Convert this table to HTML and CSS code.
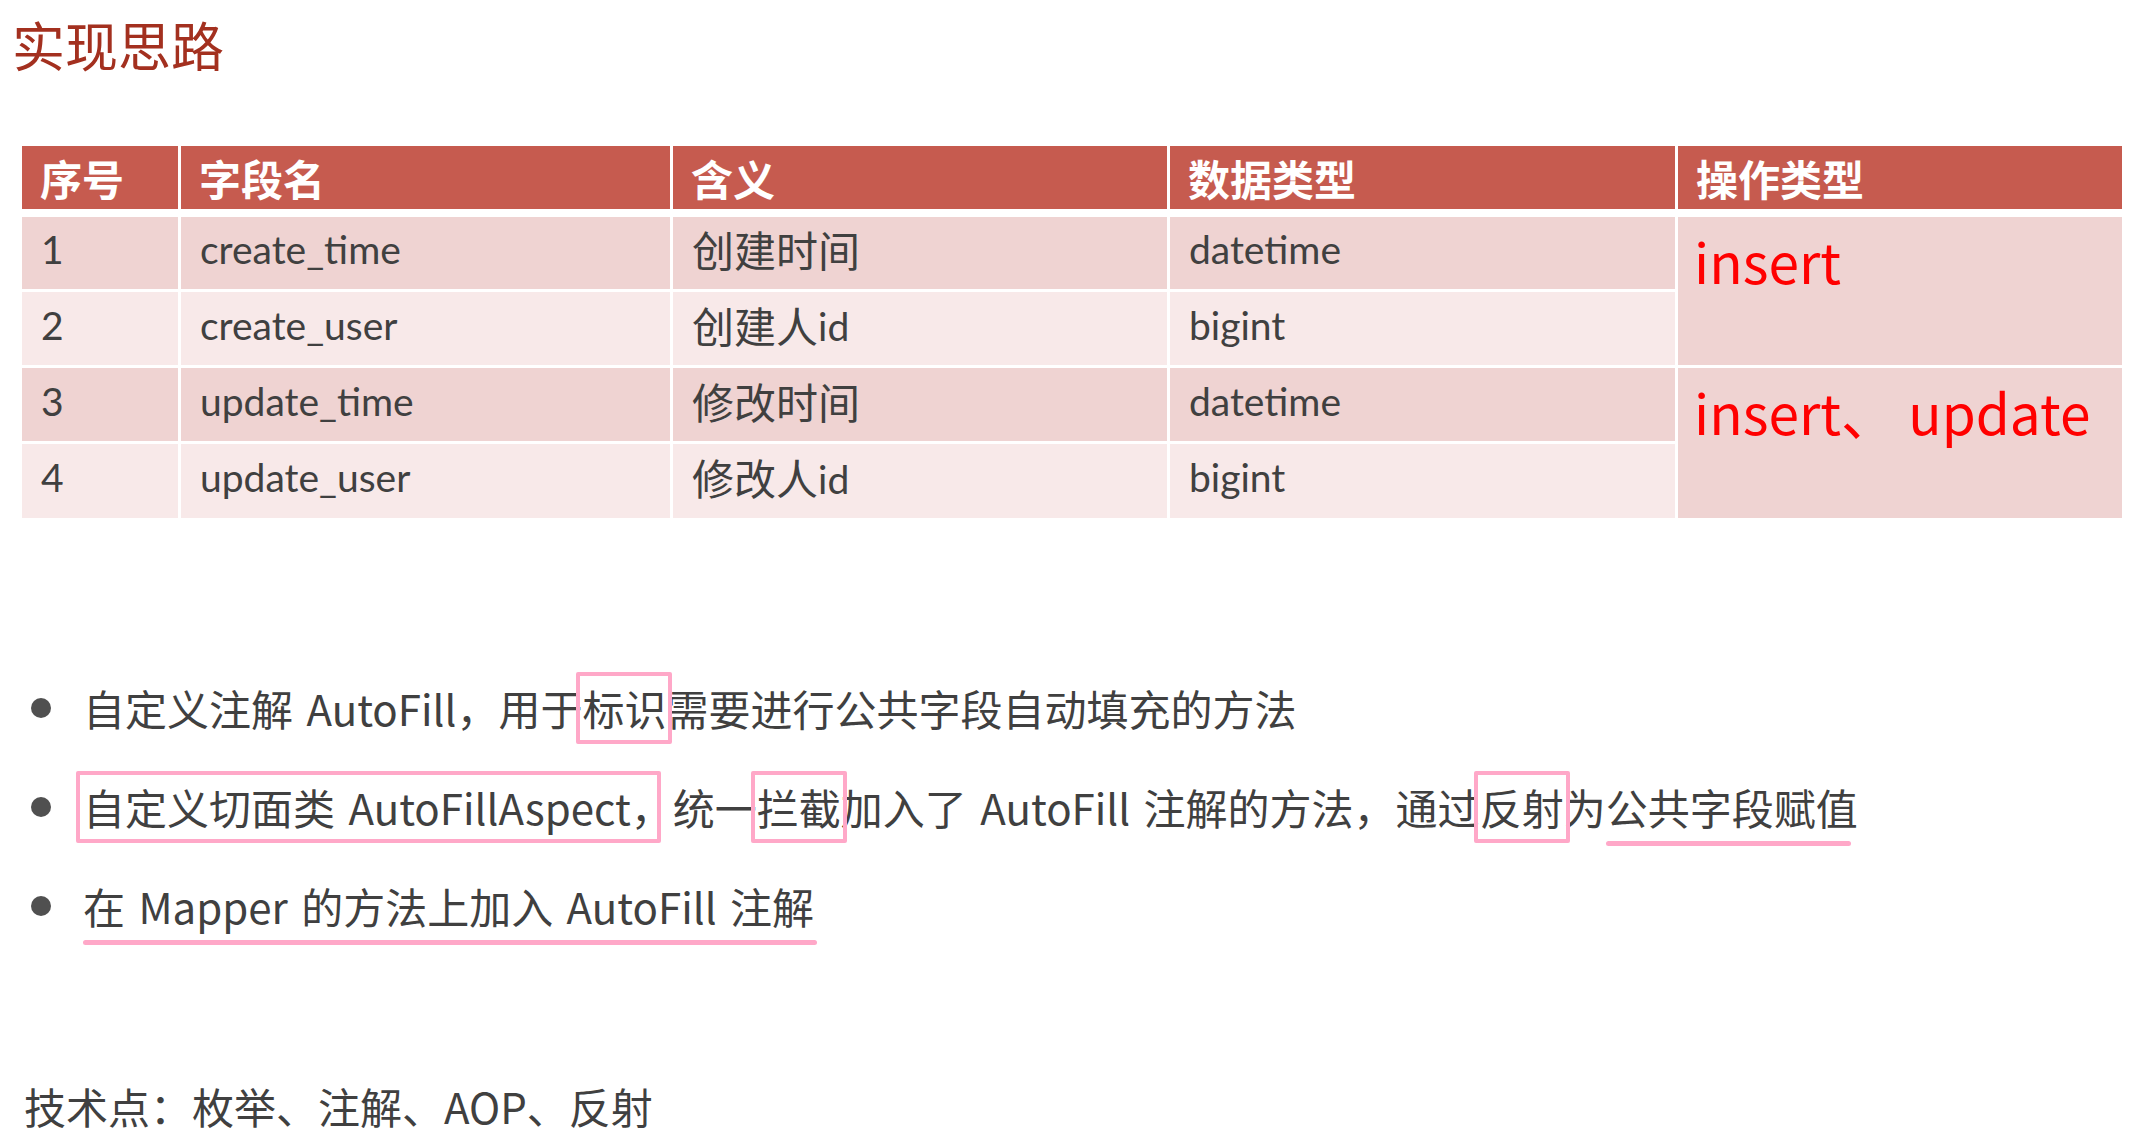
FILE: index.html
```html
<!DOCTYPE html>
<html lang="zh-CN">
<head>
<meta charset="utf-8">
<title>实现思路</title>
<link rel="stylesheet" href="styles.css">
</head>
<body>
<main class="slide">
  <h1 class="title">实现思路</h1>

  <section class="table">
    <div class="thead">
      <div class="th">序号</div>
      <div class="th">字段名</div>
      <div class="th">含义</div>
      <div class="th">数据类型</div>
      <div class="th">操作类型</div>
    </div>
    <div class="tbody">
      <div class="td dark en">1</div>
      <div class="td dark en">create_time</div>
      <div class="td dark">创建时间</div>
      <div class="td dark en">datetime</div>
      <div class="td op">insert</div>

      <div class="td light en">2</div>
      <div class="td light en">create_user</div>
      <div class="td light">创建人<span class="en">id</span></div>
      <div class="td light en">bigint</div>

      <div class="td dark en">3</div>
      <div class="td dark en">update_time</div>
      <div class="td dark">修改时间</div>
      <div class="td dark en">datetime</div>
      <div class="td op">insert、 update</div>

      <div class="td light en">4</div>
      <div class="td light en">update_user</div>
      <div class="td light">修改人<span class="en">id</span></div>
      <div class="td light en">bigint</div>
    </div>
  </section>

  <ul class="points">
    <li class="point"><span class="dot"></span><span class="text">自定义注解 AutoFill，用于<span class="box">标识</span>需要进行公共字段自动填充的方法</span></li>
    <li class="point"><span class="dot"></span><span class="text"><span class="box box-wide">自定义切面类 AutoFillAspect，</span>统一<span class="box">拦截</span>加入了 AutoFill 注解的方法，通过<span class="box">反射</span>为<span class="uline uline-short">公共字段赋值</span></span></li>
    <li class="point"><span class="dot"></span><span class="text"><span class="uline uline-long">在 Mapper 的方法上加入 AutoFill 注解</span></span></li>
  </ul>

  <p class="tech">技术点：枚举、注解、AOP、反射</p>
</main>
</body>
</html>
```

FILE: styles.css
```css
html, body {
  margin: 0;
  padding: 0;
  background: #ffffff;
}

body {
  font-family: "Noto Sans CJK SC", "Noto Sans", sans-serif;
  color: #404040;
}

.slide {
  width: 2147px;
  height: 1132px;
  overflow: hidden;
  box-sizing: border-box;
  padding-top: 18px;
}

.title {
  margin: 0 0 0 12px;
  height: 53px;
  font-size: 53px;
  line-height: 53px;
  font-weight: 400;
  color: #a3301f;
}

.table {
  margin: 75px 0 0 22px;
  width: 2100px;
}

.thead,
.tbody {
  display: grid;
  grid-template-columns: 156px 489px 494px 505px 444px;
  column-gap: 3px;
}

.thead {
  height: 63px;
  margin-bottom: 8px;
}

.th {
  background: #c65b4f;
  color: #ffffff;
  font-size: 42px;
  font-weight: 700;
  display: flex;
  align-items: center;
  padding-left: 18px;
}

.tbody {
  grid-template-rows: 72px 73px 73px 74px;
  row-gap: 3px;
}

.td {
  display: flex;
  align-items: center;
  padding-left: 19px;
  padding-bottom: 7px;
  font-size: 42px;
  line-height: 1.3;
  color: #404040;
}

.en {
  font-family: "Lato", "Noto Sans CJK SC", sans-serif;
  font-size: 39px;
}

.td .en {
  padding-top: 3px;
}

.dark {
  background: #efd3d2;
}

.light {
  background: #f8e9e9;
}

.op {
  grid-row: span 2;
  background: #efd3d2;
  color: #ff0000;
  font-size: 55px;
  line-height: 68px;
  align-items: flex-start;
  padding-left: 16px;
  padding-top: 9px;
  padding-bottom: 0;
  white-space: pre;
}

.points {
  list-style: none;
  margin: 140px 0 0 0;
  padding: 0 0 0 31px;
}

.point {
  height: 99px;
  display: flex;
  align-items: center;
  font-size: 42px;
  line-height: 60px;
  word-spacing: 4px;
  color: #404040;
}

.dot {
  width: 20px;
  height: 20px;
  border-radius: 50%;
  background: #505050;
  flex: none;
  margin-right: 32px;
}

.text {
  white-space: nowrap;
}

.box,
.uline {
  position: relative;
}

.box::after {
  content: "";
  position: absolute;
  left: -6px;
  right: -6px;
  top: -5px;
  bottom: -6px;
  border: 4px solid #ffa8c8;
  border-radius: 2px;
}

.box-wide::after {
  left: -7px;
  right: 12px;
}

.uline::after {
  content: "";
  position: absolute;
  left: 0;
  right: 0;
  bottom: -9px;
  height: 5px;
  border-radius: 3px;
  background: #ffa8c8;
}

.uline-short::after {
  right: 7px;
}

.uline-long::after {
  left: 0;
  right: -3px;
}

.tech {
  margin: 121px 0 0 24px;
  font-size: 42px;
  line-height: 60px;
  color: #404040;
}
```
